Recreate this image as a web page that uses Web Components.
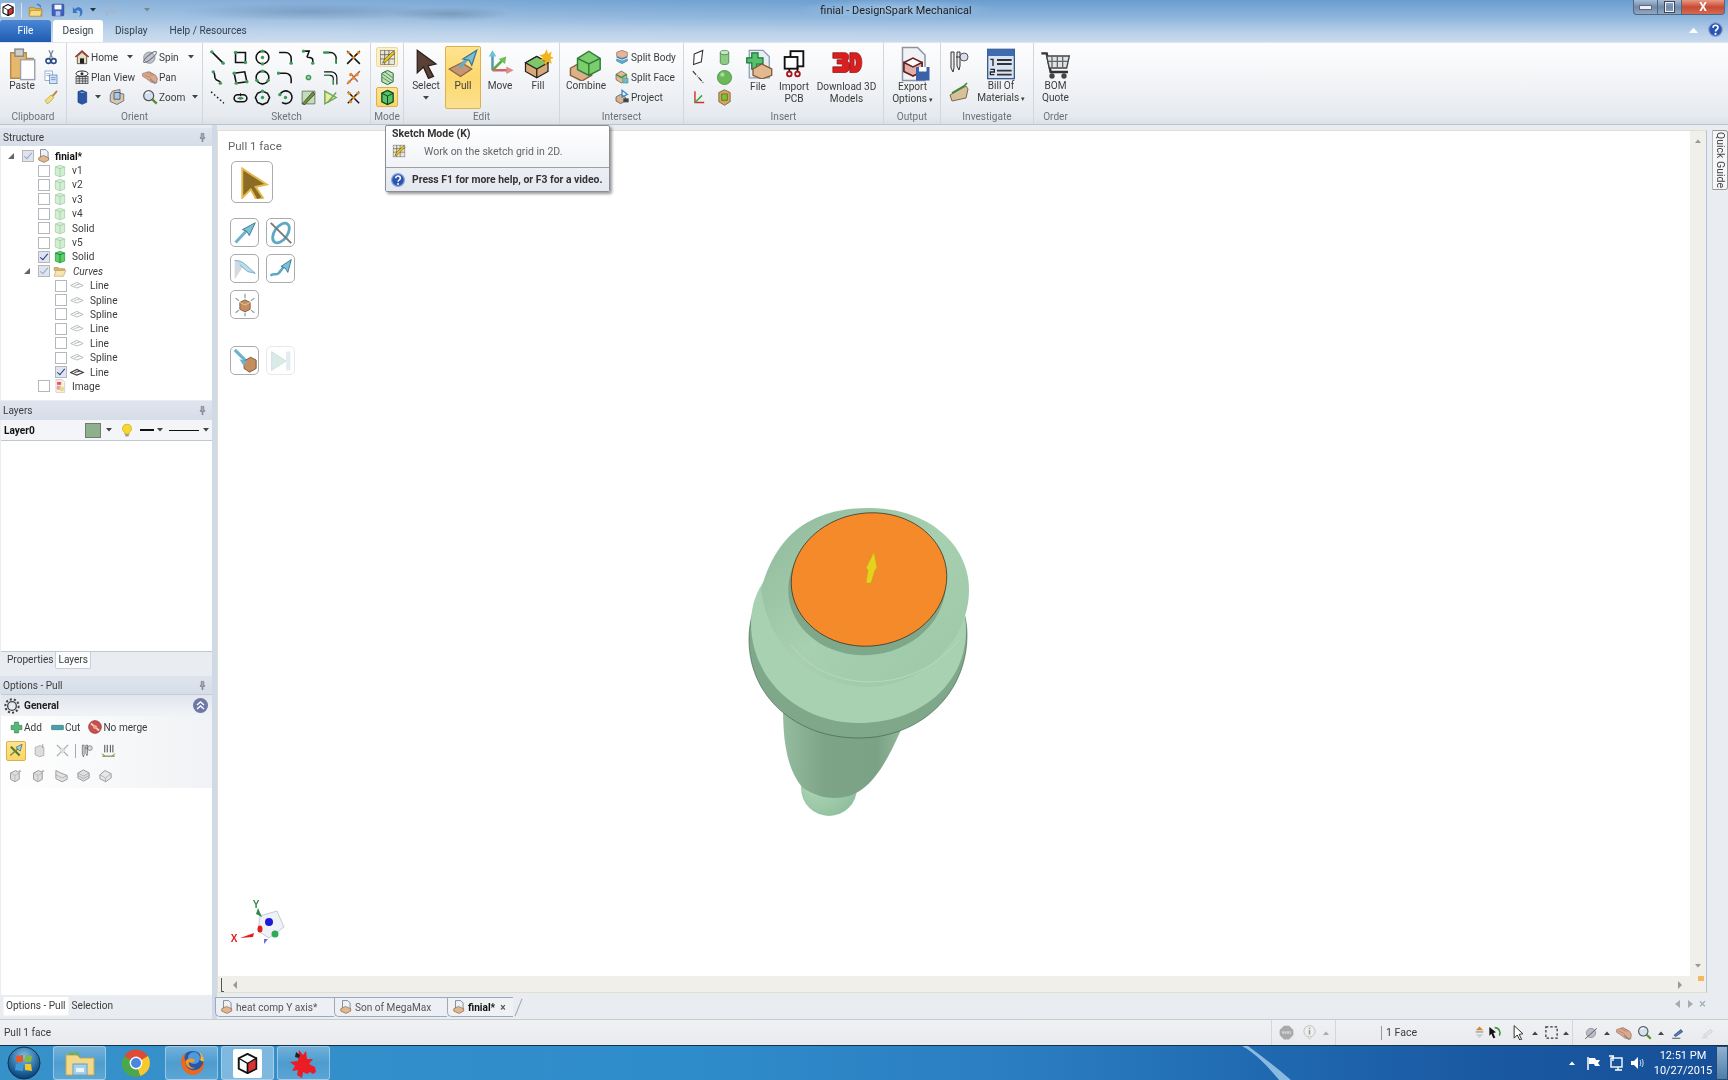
<!DOCTYPE html>
<html><head><meta charset="utf-8"><title>finial - DesignSpark Mechanical</title>
<style>
html,body{margin:0;padding:0;width:1728px;height:1080px;overflow:hidden;background:#e9edf2}
body{font:10.1px Roboto,"Liberation Sans",sans-serif;color:#3c3c3c;display:flex;flex-direction:column;position:relative;filter:blur(.35px)}
</style></head><body>
<ds-titlebar></ds-titlebar>
<ds-ribbon>
 <ds-rgroup label="Clipboard" w="67"><ds-big icon="paste" w="38" ml="3" isize="34">Paste</ds-big><ds-col ml="2"><ds-row icon="cut"></ds-row><ds-row icon="copy"></ds-row><ds-row icon="brush"></ds-row></ds-col></ds-rgroup>
 <ds-rgroup label="Orient" w="136"><ds-col w="68" ml="7"><ds-row icon="home" caret="1" cg="9">Home</ds-row><ds-row icon="plan">Plan View</ds-row><ds-row icon="cube" caret="1" cg="5" cf="1"><ds-icon name="paper" size="18" style="margin-left:6px"></ds-icon></ds-row></ds-col><ds-col w="58"><ds-row icon="spin" caret="1" cg="9">Spin</ds-row><ds-row icon="hand">Pan</ds-row><ds-row icon="zoom" caret="1" cg="7">Zoom</ds-row></ds-col></ds-rgroup>
 <ds-rgroup label="Sketch" w="168"><ds-icongrid ml="3" cols="7" cw="22.7" names="s1 s2 s3 s4 s5 s6 x1 s7 s8 s9 s10 s11 s12 x2 s13 s14 s15 s16 s17 s18 x3"></ds-icongrid></ds-rgroup>
 <ds-rgroup label="Mode" w="33"><ds-icongrid ml="5" cols="1" cw="22" hot="0:soft,2:on" names="sketchmode section solidmode"></ds-icongrid></ds-rgroup>
 <ds-rgroup label="Edit" w="156"><ds-big icon="select" w="40" ml="2" caret="block">Select</ds-big><ds-big icon="pull" w="36" ml="-1" hot="1">Pull</ds-big><ds-big icon="move" w="38">Move</ds-big><ds-big icon="fill" w="38">Fill</ds-big></ds-rgroup>
 <ds-rgroup label="Intersect" w="124"><ds-big icon="combine" w="48" ml="2" isize="34">Combine</ds-big><ds-col ml="4"><ds-row icon="splitb">Split Body</ds-row><ds-row icon="splitf">Split Face</ds-row><ds-row icon="project">Project</ds-row></ds-col></ds-rgroup>
 <ds-rgroup label="Insert" w="200"><ds-icongrid ml="1" cols="2" cw="26" names="plane cyl dline sphere axes mod"></ds-icongrid><ds-big icon="file" w="34" ml="4" isize="30" ih="34">File</ds-big><ds-big icon="pcb" w="38" isize="28" ih="34">Import<br>PCB</ds-big><ds-big icon="d3" w="67" isize="34" ih="34">Download 3D<br>Models</ds-big></ds-rgroup>
 <ds-rgroup label="Output" w="57"><ds-big icon="export" w="53" ml="2" isize="36" ih="34">Export<br>Options<span style="font-size:7px"> ▾</span></ds-big></ds-rgroup>
 <ds-rgroup label="Investigate" w="93"><ds-icongrid ml="4" cols="1" cw="28" rh="30" names="caliper wedge"></ds-icongrid><ds-big icon="bom" w="56" isize="32">Bill Of<br>Materials<span style="font-size:7px"> ▾</span></ds-big></ds-rgroup>
 <ds-rgroup label="Order" w="43" noline="1"><ds-big icon="cart" w="41" ml="1" isize="32">BOM<br>Quote</ds-big></ds-rgroup>
</ds-ribbon>
<ds-main>
 <ds-left slot="left"></ds-left>
 <ds-canvas slot="canvas"></ds-canvas>
 <ds-doctabs slot="tabs"></ds-doctabs>
 <ds-quickguide slot="guide">Quick Guide</ds-quickguide>
</ds-main>
<ds-status></ds-status>
<ds-taskbar></ds-taskbar>
<ds-tooltip></ds-tooltip>
<script>
const K='stroke="#111" fill="none" stroke-width="2.2"';
const G=(x,y,r=2.4)=>`<circle cx="${x}" cy="${y}" r="${r}" fill="#3d9a5a"/>`;
const O=(x,y)=>`<circle cx="${x}" cy="${y}" r="2.2" fill="#e98a1f"/>`;
const ICONS={
home:`<path d="M2 12L12 3l10 9" fill="none" stroke="#a33" stroke-width="2.4"/><path d="M5 11v11h14V11l-7-6z" fill="#e8dcc0" stroke="#222"/><rect x="9" y="14" width="6" height="8" fill="#222"/>`,
plan:`<rect x="3" y="11" width="18" height="11" fill="#ddd" stroke="#333"/><path d="M3 14.5h18M3 18h18M8 11v11M13 11v11M17 11v11" stroke="#333"/><ellipse cx="12" cy="7" rx="9" ry="4" fill="#fff" stroke="#222" stroke-width="1.5"/><circle cx="12" cy="7" r="2.3" fill="#234"/>`,
cube:`<path d="M6 4l6-2 7 3v15l-7 3-6-3z" fill="#2a55a5" stroke="#123a7a"/><path d="M6 4l6 3 7-2" fill="#8fb0e6" stroke="#123a7a"/>`,
paper:`<path d="M6 4l10-2v5l5 1v9l-9 5-9-4V9z" fill="#d9c8a8" stroke="#557"/><path d="M8 6h8v9H8z" fill="#aac6ea" stroke="#345"/>`,
spin:`<circle cx="11" cy="13" r="8.5" fill="#c2c5ce" stroke="#777"/><ellipse cx="12" cy="12" rx="12" ry="3.2" transform="rotate(-40 12 12)" fill="none" stroke="#6b7080" stroke-width="1.6"/>`,
hand:`<path d="M1 7l9-3 10 5 3 5-1 7-8-1-8-6-5-3z" fill="#dda88d" stroke="#8d6a5a"/><path d="M4 9l9 4M7 5l9 5M11 4l7 5" stroke="#a37c68"/><path d="M12 15l8 7" stroke="#888" stroke-width="2"/>`,
zoom:`<circle cx="10" cy="10" r="7.5" fill="#cfe1f2" stroke="#555" stroke-width="1.8"/><path d="M6 7a5 5 0 015-2" stroke="#fff" fill="none" stroke-width="2"/><path d="M15.5 15.5L22 22" stroke="#5e8a2a" stroke-width="3.5"/>`,
cut:`<path d="M9 2l5 11M15 2l-5 11" stroke="#789" stroke-width="2"/><circle cx="8" cy="18" r="3.6" fill="none" stroke="#2d4d85" stroke-width="2.4"/><circle cx="16" cy="18" r="3.6" fill="none" stroke="#2d4d85" stroke-width="2.4"/>`,
copy:`<rect x="3" y="3" width="11" height="14" fill="#fff" stroke="#6a8fc2"/><path d="M5 7h6M5 10h6" stroke="#6a8fc2"/><rect x="10" y="9" width="11" height="13" fill="#d5e5f7" stroke="#4a76b5"/><path d="M12 13h7M12 16h7" stroke="#4a76b5"/>`,
brush:`<path d="M13 10l7-8 2 2-7 8z" fill="#b58a43"/><path d="M3 17c3-1 6-6 9-8l4 4c-2 3-6 8-10 9z" fill="#f1df7f" stroke="#b39a3a"/>`,
paste:`<path d="M4 4h11v4h5v14H4z" fill="#e7b76d" stroke="#b48b4a"/><rect x="7" y="1.5" width="6" height="5" fill="#cfcfcf" stroke="#888"/><rect x="11" y="9" width="10" height="14" fill="#fff" stroke="#9aa3ad"/>`,
select:`<path d="M5 1l15 11-6.5 1.5L18 22l-4 1.5-4-9L5 19z" fill="#5b4038" stroke="#2a1f1b"/>`,
pull:`<path d="M1 16l10-5 8 5-9 6z" fill="#c69572" stroke="#8b6546"/><path d="M9 15L17 6" stroke="#6fa9bf" stroke-width="2.8"/><path d="M23 1l-4 12-2-4-5-1z" fill="#7dbcd2" stroke="#3b7990"/>`,
move:`<path d="M6 3v14" stroke="#4e9bb1" stroke-width="2"/><path d="M6 1l3 5H3z" fill="#6cc0d8"/><path d="M6 17l8-8" stroke="#62a84b" stroke-width="2"/><path d="M17 6l-1 6-5-4z" fill="#6fbe55"/><path d="M6 17h14" stroke="#c76a6a" stroke-width="2"/><path d="M23 17l-6 3v-6z" fill="#e08a8a"/>`,
fill:`<path d="M2 11l9-5 9 5v7l-9 5-9-5z" fill="#d8a977" stroke="#222"/><path d="M2 11l9-5 9 5-9 5z" fill="#7ec66a" stroke="#222"/><path d="M11 16v7" stroke="#222"/><path d="M19 0l1 4 3-2-1 4 3 1-3 1 1 4-3-2-2 3-1-4-4 1 3-3-3-2 4-1z" fill="#f2b31e"/>`,
combine:`<path d="M1 15l7-4 8 4v5l-7 4-8-4z" fill="#dcb088" stroke="#88603d"/><path d="M6 8l8-5 8 5v8l-8 4-8-4z" fill="#7ccd6e" stroke="#2e7a36"/><path d="M6 8l8 4 8-4M14 12v8" stroke="#2e7a36" fill="none"/>`,
splitb:`<path d="M4 5l8-3 8 3v6l-8 3-8-3z" fill="#e3b59a" stroke="#8b6a55"/><path d="M4 12l8 3 8-3" stroke="#3a78c2" fill="none" stroke-width="2"/><path d="M4 15l8 3 8-3v3l-8 4-8-4z" fill="#5cb0c2" stroke="#48a"/>`,
splitf:`<path d="M3 8l8-5 8 5v8l-8 5-8-5z" fill="#e3b59a" stroke="#6a5040"/><path d="M3 8l8 5 8-5" stroke="#2a9a46" stroke-width="2" fill="none"/><path d="M13 14l8 0v7h-8z" fill="#7ab2dd" stroke="#3a6"/>`,
project:`<path d="M3 12l7-4 7 4v6l-7 4-7-4z" fill="#d8b38e" stroke="#444"/><path d="M12 2l8 6-8 4z" fill="none" stroke="#3a8acb" stroke-width="2"/><path d="M14 14h8v6h-8z" fill="#444"/>`,
plane:`<path d="M6 7l12-5-2 16-11 4z" fill="#fff" stroke="#333" stroke-width="1.5"/>`,
cyl:`<path d="M6 5v14c0 4 12 4 12 0V5z" fill="#8fca86" stroke="#2d7a3e"/><ellipse cx="12" cy="5" rx="6" ry="3" fill="#c8e7c0" stroke="#2d7a3e"/>`,
dline:`<path d="M4 3l16 18" stroke="#333" stroke-width="1.6" stroke-dasharray="7 2 1 2"/>`,
sphere:`<circle cx="12" cy="12" r="10" fill="#69b959" stroke="#3f7f3c"/><circle cx="9" cy="8" r="3" fill="#a9dc9a"/>`,
axes:`<path d="M7 3v16h13" fill="none" stroke="#c33" stroke-width="2"/><path d="M7 19L17 9" stroke="#3a3" stroke-width="2"/>`,
mod:`<path d="M12 1l8 4v13l-8 5-8-5V5z" fill="#d4a560" stroke="#6a4a20"/><path d="M8 7h8v9H8z" fill="#7fbf3a" stroke="#3b6a1a"/>`,
file:`<path d="M5 1h11l5 5v17H5z" fill="#e9eef5" stroke="#8a9bb0"/><path d="M7 3h5v4h4v5h-5v4H7V11H3V7h4z" fill="#58bf6b" stroke="#1a7a3a"/><path d="M8 16l7-4 8 4v5l-8 3-7-3z" fill="#e2b98f" stroke="#7a5535"/>`,
pcb:`<rect x="9" y="1" width="11" height="13" fill="#fff" stroke="#111" stroke-width="1.6"/><rect x="4" y="6" width="11" height="10" fill="#fff" stroke="#111" stroke-width="1.6"/><path d="M8 16v3M15 14v5" stroke="#111" stroke-width="1.5"/><circle cx="8" cy="20.5" r="2" fill="none" stroke="#a11" stroke-width="1.5"/><circle cx="15" cy="20.5" r="2" fill="none" stroke="#a11" stroke-width="1.5"/>`,
d3:`<path d="M2 4h8c4 0 4 4 2 6 3 1 3 7-1 8H2v-4h6c1 0 1-2 0-2H5V9h3c1 0 1-1 0-1H2z" fill="#d91f1f" stroke="#8d1010" stroke-width=".5"/><path d="M14 4h4c6 0 6 14 0 14h-4zM17 8v6c2 0 2-6 0-6z" fill="#d91f1f" stroke="#8d1010" stroke-width=".5"/>`,
export:`<path d="M5 1h10l5 5v17H5z" fill="#f1f2f5" stroke="#8a94a5"/><path d="M6 11l6-3 6 3v6l-6 3-6-3z" fill="#fff" stroke="#622"/><path d="M6 11l6 3 6-3v6l-6 3-6-3z" fill="#e0b0a8" stroke="#622"/><rect x="14" y="14" width="9" height="9" fill="#3b62a8"/><rect x="16" y="14" width="5" height="3" fill="#fff"/>`,
caliper:`<path d="M4 2v16l2 4 1-4V2zM10 2v14l2 4 1-4V2z" fill="#eee" stroke="#333"/><circle cx="17" cy="7" r="4" fill="#dde" stroke="#555"/><path d="M13 7H9" stroke="#333"/>`,
wedge:`<path d="M3 15l16-9 2 3-2 9-14 3z" fill="#d6c19a" stroke="#7a6a4a"/><path d="M5 13L17 6l3-3" stroke="#3a8a3a" fill="none" stroke-width="1.6"/>`,
bom:`<rect x="2" y="1" width="20" height="22" fill="#d8e4f4" stroke="#395a8c"/><rect x="2" y="1" width="20" height="5" fill="#3f6cb0"/><path d="M9 9h11M9 12h11M9 17h11M9 20h11" stroke="#333" stroke-width="1.4"/><path d="M4 8.5h2v5M4 16h3v2H4v2h3" stroke="#222" fill="none"/>`,
cart:`<path d="M1 4h4l3 14h13" fill="none" stroke="#333" stroke-width="1.8"/><path d="M5 6h17l-2 9H7z" fill="#dfe4ea" stroke="#444"/><path d="M9 6v9M13 6v9M17 6v9M6 10h15" stroke="#666"/><circle cx="9" cy="21" r="2" fill="#444"/><circle cx="18" cy="21" r="2" fill="#444"/>`,
sketchmode:`<rect x="2" y="2" width="20" height="20" fill="#e9e6d6" stroke="#777"/><path d="M2 8h20M2 14h20M8 2v20M14 2v20" stroke="#3a3a3a" stroke-width=".9"/><path d="M5 20l3-6L20 3l2 3L10 18z" fill="#e6c11f" stroke="#6b5a10"/>`,
section:`<path d="M12 2l8 4v12l-8 4-8-4V6z" fill="#bfe2b5" stroke="#2a6a3a" stroke-width="1.4"/><path d="M5 7l14 10M5 12l12 8M8 4l11 8" stroke="#2a6a3a"/>`,
solidmode:`<path d="M12 2l8 4v12l-8 4-8-4V6z" fill="#59c06b" stroke="#0a4a20" stroke-width="1.8"/><path d="M4 6l8 4 8-4M12 10v12" fill="none" stroke="#0a4a20" stroke-width="1.4"/>`,
s1:`<path d="M4 4l16 16" ${K}/>${G(4,4)}${G(20,20)}`,
s2:`<path d="M5 5h14v14H5z" ${K}/>${G(5,5)}${G(19,19)}`,
s3:`<circle cx="12" cy="12" r="9" ${K}/>${G(12,12)}${G(12,3)}${G(12,21)}`,
s4:`<path d="M3 5h9a8 8 0 018 8v7" ${K}/>${G(20,20)}`,
s5:`<path d="M5 3h8l-3 8c0 2 8 0 8 4v5" ${K}/>${G(5,3)}${G(18,20)}`,
s6:`<path d="M2 5h10a8 8 0 018 8v7" fill="none" stroke="#111" stroke-width="2"/><path d="M2 5h8" stroke="#2d9a4a" stroke-width="3"/><path d="M20 14v7" stroke="#2d9a4a" stroke-width="2"/>`,
x1:`<path d="M3 3l18 18M21 3L3 21" stroke="#111" stroke-width="2"/>${O(12,12)}${O(5,5)}${O(19,5)}`,
s7:`<path d="M6 4c4 2 0 8 4 11s6 1 6 5" ${K}/>${G(6,4)}${G(16,20)}`,
s8:`<path d="M3 6l15-2 3 14-15 2z" ${K}/>${G(3,6)}${G(21,18)}${G(6,20)}`,
s9:`<circle cx="12" cy="12" r="9" ${K}/>${G(12,3)}${G(4,16)}${G(20,16)}`,
s10:`<path d="M2 6h10a8 8 0 018 8v6" ${K}/>${G(2,6)}`,
s11:`<circle cx="12" cy="12" r="4" fill="#3d9a5a"/><circle cx="12" cy="12" r="2" fill="#9fd4a9"/>`,
s12:`<path d="M3 9h8a5 5 0 015 5v8M3 4h10a8 8 0 018 8v10" fill="none" stroke="#111" stroke-width="1.6"/><path d="M3 9h8M16 15v7" stroke="#2d9a4a" stroke-width="2"/>`,
x2:`<path d="M3 21L21 3" stroke="#a66" stroke-width="2"/><path d="M8 6l10 12" stroke="#a66" stroke-width="2"/>${O(8,8)}${O(17,8)}${O(12,13)}${O(6,18)}`,
s13:`<path d="M3 4l18 16" stroke="#111" stroke-width="2" stroke-dasharray="2.2 3.4"/>`,
s14:`<rect x="3" y="8" width="18" height="10" rx="5" ${K}/><path d="M8 13h8M12 6v4" stroke="#111" stroke-width="1.5"/>${G(12,13)}`,
s15:`<path d="M12 3l7 3 3 6-3 7-7 3-7-3-3-7 3-6z" ${K}/>${G(12,12)}${G(12,3)}`,
s16:`<path d="M4 8a9 9 0 1 1 3 11" ${K}/>${G(12,12)}${G(4,8)}`,
s17:`<path d="M3 3h18v18H3z" fill="#bde0b8" stroke="#555"/><path d="M3 21L18 4l3 3L7 22z" fill="#7d8a3a" stroke="#333"/>`,
s18:`<path d="M4 3l16 9-16 9z" fill="#f0e8a0" stroke="#6aa85a" stroke-width="2"/><path d="M8 19L20 5" stroke="#6aa85a" stroke-width="2"/>`,
x3:`<path d="M4 4l16 16M20 4L4 20" stroke="#111" stroke-width="2"/>${O(12,12)}${O(6,6)}${O(18,6)}${O(8,18)}`,
cubeL:`<path d="M4 5l8-3 8 3v14l-8 3-8-3z" fill="#d4eed4" stroke="#8fc294"/><path d="M4 5l8 3 8-3M12 8v14" fill="none" stroke="#8fc294"/>`,
cubeA:`<path d="M4 5l8-3 8 3v14l-8 3-8-3z" fill="#62cd66" stroke="#083"/><path d="M4 5l8 3 8-3M12 8v14" fill="none" stroke="#073" stroke-width="1.3"/>`,
doc:`<path d="M6 1h9l4 4v12H6z" fill="#eef1f5" stroke="#6b7a90" stroke-width="1.4"/><path d="M3 15l8-4 9 4v4l-8 4-9-4z" fill="#e3b68d" stroke="#7a5535"/>`,
folder:`<path d="M2 6h7l2 2h9v3H2z" fill="#d9b66b" stroke="#a98a4a"/><path d="M2 21l3-10h17l-4 10z" fill="#f6e4b2" stroke="#b39a55"/>`,
eyeL:`<path d="M1 12l10-5 10 5-10 4zM7 12l8-2" fill="none" stroke="#b6c0bb" stroke-width="1.6"/>`,
eyeA:`<path d="M1 12l10-5 10 5-10 4zM7 12l8-2" fill="none" stroke="#444" stroke-width="2"/>`,
image:`<path d="M5 1h11l4 4v18H5z" fill="#f4f2ef" stroke="#bbb"/><circle cx="10" cy="15" r="4" fill="#e9a0a0"/><circle cx="15" cy="17" r="4" fill="#f1d67a"/><path d="M7 5h7v5H7z" fill="#e55"/>`,
pin:`<path d="M9 3h6v9h2v2h-4v7h-2v-7H7v-2h2z" fill="#aab" stroke="#556"/>`,
add:`<path d="M8 2h8v6h6v8h-6v6H8v-6H2V8h6z" fill="#5bb577" stroke="#2a7a4a"/>`,
cutm:`<rect x="1" y="8" width="22" height="8" rx="1" fill="#4aa0a8" stroke="#2a6a7a"/>`,
nomerge:`<circle cx="12" cy="12" r="11" fill="#c8504a" stroke="#8a2a2a"/><path d="M5 6l14 12" stroke="#f2d4d0" stroke-width="3"/><circle cx="12" cy="12" r="3.5" fill="#e9a7a0"/>`,
o1:`<path d="M3 6l14 14" stroke="#4a7a2a" stroke-width="3"/><path d="M2 20L20 4" stroke="#6a8a3a" stroke-width="2"/><path d="M21 2l-3 11-7-6z" fill="#9fd0dc" stroke="#357"/>`,
o2:`<path d="M5 7l8-3 6 3v13l-7 2-7-3z" fill="#ddd" stroke="#999"/><path d="M17 2v6" stroke="#aaa" stroke-width="2"/>`,
o3:`<path d="M3 21L21 3M3 3l18 18" stroke="#aaa" stroke-width="2"/><path d="M12 7l5 5-5 5-5-5z" fill="#ddd"/>`,
o5:`<path d="M2 21h20M2 17l4 4M22 17l-4 4" stroke="#6a7a1a" stroke-width="1.6" fill="none"/><path d="M6 3v12M10 3v12M15 3v12M19 3v12" stroke="#333" stroke-width="1.4"/>`,
og1:`<path d="M4 8l8-4 6 3v11l-7 4-7-4z" fill="#ddd" stroke="#999" stroke-width="1.5"/><path d="M4 8l7 4 7-4M11 12v10" fill="none" stroke="#aaa"/><path d="M19 3v4M17 5h4" stroke="#aaa" stroke-width="1.5"/>`,
og3:`<path d="M3 4l8 4 10 4v6l-8 4-10-5z" fill="#e3e3e3" stroke="#999" stroke-width="1.5"/><path d="M3 11l10 5 8-4" fill="none" stroke="#999"/>`,
og4:`<path d="M3 8l9-5 9 5v8l-9 5-9-5z" fill="#e0e0e0" stroke="#999" stroke-width="1.5"/><path d="M3 8l9 5 9-5M3 12l9 5 9-5" fill="none" stroke="#999"/>`,
og5:`<path d="M3 11l8-7 10 5v7l-9 6-9-5z" fill="#e7e7e7" stroke="#999" stroke-width="1.5"/><path d="M3 11l9 5 9-7M12 16v6" fill="none" stroke="#999"/>`,
gear:`<circle cx="12" cy="12" r="6.5" fill="none" stroke="#444" stroke-width="2"/><circle cx="12" cy="12" r="10" fill="none" stroke="#444" stroke-width="3" stroke-dasharray="3.2 3"/>`,
bulb:`<path d="M12 2a7.5 7.5 0 00-4 14v3h8v-3a7.5 7.5 0 00-4-14z" fill="#f8d82a" stroke="#c09a10"/><rect x="9" y="19" width="6" height="4" fill="#999"/>`,
help:`<circle cx="12" cy="12" r="11" fill="#2b55b3" stroke="#8ba4d6" stroke-width="2"/><path d="M8 9c0-5 8-5 8 0 0 3-4 3-4 6" fill="none" stroke="#fff" stroke-width="2.6"/><circle cx="12" cy="19" r="1.7" fill="#fff"/>`,
stop:`<path d="M8 1h8l7 7v8l-7 7H8l-7-7V8z" fill="#a9a9a9"/><path d="M5 12h14" stroke="#d6d6d6" stroke-width="4" stroke-dasharray="3 1"/>`,
info:`<circle cx="12" cy="10" r="9" fill="#eee" stroke="#bbb" stroke-width="1.4"/><path d="M12 8v7M12 4.5v1.7" stroke="#999" stroke-width="2.4"/><path d="M9 19l3 4 3-4" fill="#eee" stroke="#bbb"/>`,
sortud:`<path d="M12 1l7 7H5z" fill="#d18a2b"/><path d="M5 11h14" stroke="#888" stroke-width="2"/><path d="M5 15h14l-7 7z" fill="#ccc"/>`,
curs:`<path d="M5 3l10 8-4 1 3 7-3 1-3-7-3 3z" fill="#111"/><path d="M13 4a8 8 0 017 12" stroke="#3a9a3a" stroke-width="2.4" fill="none"/>`,
arrowO:`<path d="M5 1l14 13-6 1 4 8-3 1-4-8-5 5z" fill="#fff" stroke="#333" stroke-width="1.6"/>`,
dashrect:`<rect x="3" y="3" width="18" height="18" fill="none" stroke="#333" stroke-width="2" stroke-dasharray="4 3"/>`,
spinS:`<circle cx="12" cy="12" r="8" fill="#b9bcc6" stroke="#777"/><path d="M2 22L22 4" stroke="#556" stroke-width="1.6"/>`,
penS:`<path d="M2 21h14" stroke="#345" stroke-width="1.5"/><path d="M5 16l12-10 3 4-12 8z" fill="#5476c6" stroke="#234"/>`,
penG:`<path d="M3 20h10" stroke="#bbb"/><path d="M6 16l12-10 3 4-12 8z" fill="#e8e8e8" stroke="#bbb"/>`,
appcube:`<path d="M12 1l10 5v12l-10 5L2 18V6z" fill="#fff" stroke="#111" stroke-width="2.2"/><path d="M12 12l10-6v12l-10 5z" fill="#d83232" stroke="#111" stroke-width="1.5"/><path d="M2 6l10 6v11M12 12" fill="none" stroke="#111" stroke-width="1.6"/>`,
open:`<path d="M2 7h8l2 2h10v12H2z" fill="#e8b93d" stroke="#a07a20"/><path d="M4 12h18l-2 9H2z" fill="#f7dc88" stroke="#b08a2d"/><path d="M14 2c4 0 6 2 6 5" stroke="#3a78c2" fill="none" stroke-width="2"/>`,
save:`<rect x="2" y="2" width="20" height="20" rx="1.5" fill="#3f5fbf" stroke="#223a88"/><rect x="6" y="3" width="12" height="8" fill="#f5f5f5"/><rect x="8" y="14" width="8" height="8" fill="#a9c0f0"/>`,
undo:`<path d="M7 9c6-5 13 0 11 8-1 2-2 4-5 5 3-5 2-9-1-10-2-1-3 0-4 1l3 3H3V6l2 3z" fill="#3d74c2"/>`,
redo:`<path d="M17 9c-6-5-13 0-11 8 1 2 2 4 5 5-3-5-2-9 1-10 2-1 3 0 4 1l-3 3h8V6l-2 3z" fill="#9fb7d0"/>`,
};
const ico=(n,s=16,st='')=>`<svg width="${s}" height="${s}" viewBox="0 0 24 24" style="display:block;flex:none;${st}" aria-hidden="true">${ICONS[n]||''}</svg>`;
const FONT='font:10.1px Roboto,"Liberation Sans",sans-serif;color:#3c3c3c;';
const caret=(c='#444',st='')=>`<svg width="6" height="4" viewBox="0 0 6 4" style="display:block;flex:none;${st}"><path d="M0 0h6L3 3.5z" fill="${c}"/></svg>`;
const upc=(c='#555',st='')=>`<svg width="6" height="4" viewBox="0 0 6 4" style="display:block;flex:none;${st}"><path d="M0 4h6L3 .5z" fill="${c}"/></svg>`;
function def(name,render){customElements.define(name,class extends HTMLElement{constructor(){super();this.attachShadow({mode:'open'})}connectedCallback(){this.shadowRoot.innerHTML=render(this)}})}
const a=(e,n,d='')=>e.getAttribute(n)??d;

def('ds-icon',e=>`<style>:host{display:block;flex:none}</style>${ico(a(e,'name'),+a(e,'size',16))}`);

def('ds-titlebar',()=>`<style>
:host{display:block;height:42px;flex:none;position:relative;${FONT}
background:radial-gradient(ellipse 130px 9px at 310px 12px,rgba(70,100,140,.3),transparent),radial-gradient(ellipse 60px 7px at 450px 14px,rgba(60,90,110,.3),transparent),radial-gradient(ellipse 100px 10px at 896px 9px,rgba(190,215,240,.55),transparent),linear-gradient(90deg,rgba(210,225,240,.35),rgba(210,225,240,.1) 35%,transparent 55%),linear-gradient(#6a9dd0,#8eb5dc 42%,#b9d0e9 78%,#c8daee)}
.top{display:flex;height:20px;align-items:center}
.q{display:flex;align-items:center;width:166px;padding-left:1px;box-sizing:border-box}
.title{width:300px;margin-left:580px;text-align:center;font-size:10.9px;color:#1e1e1e;white-space:nowrap}
.ctl{margin-left:auto;display:flex;align-items:flex-start;align-self:flex-start;margin-right:3px}
.b{height:15px;display:flex;align-items:center;justify-content:center;box-sizing:border-box;border:1px solid #51677f;border-top:0;background:linear-gradient(#a8bed6,#6f89a8 50%,#92a9c4)}
.b.c{background:linear-gradient(#e89a84,#c74a34 50%,#d66a52);width:43px;border-radius:0 0 4px 0;color:#fff;font-weight:700;font-size:12px}
.tabs{display:flex;height:22px;align-items:flex-end}
.file{width:51px;height:22px;background:linear-gradient(#4b87d4,#1e5cb3);color:#fff;border-radius:3px 3px 0 0;text-align:center;line-height:22px}
.t{height:22px;line-height:22px;color:#33414f}
.des{width:50px;margin-left:2px;background:linear-gradient(#fff,#fcfdfe);text-align:center;border-radius:3px 3px 0 0}
.end{margin-left:auto;display:flex;align-items:center;gap:10px;padding:0 5px 5px 0}
</style>
<div class="top"><div class="q"><span style="background:#fff;padding:1px;border-radius:2px;margin-right:6px">${ico('appcube',12)}</span><span style="width:1px;height:15px;background:#d6e2f0;margin-right:6px"></span>${ico('open',15)}<span style="width:8px"></span>${ico('save',14)}<span style="width:6px"></span>${ico('undo',15)}${caret('#234','margin:0 6px 0 4px')}${ico('redo',15)}<span style="width:27px"></span>${caret('#788','')}</div>
<div class="title">finial - DesignSpark Mechanical</div>
<div class="ctl"><div class="b" style="width:25px;border-radius:0 0 0 4px"><span style="display:block;width:11px;height:3px;background:#eef;border:1px solid #667"></span></div><div class="b" style="width:24px;border-left:0"><span style="display:block;width:7px;height:8px;border:1px solid #eef;outline:1px solid #445"></span></div><div class="b c" style="border-left:0"><span>X</span></div></div></div>
<div class="tabs"><div class="file">File</div><div class="t des">Design</div><div class="t" style="margin-left:12px">Display</div><div class="t" style="margin-left:22px">Help / Resources</div>
<div class="end">${upc('#fff','width:9px;height:6px;outline:0')}${ico('help',15)}</div></div>`);

def('ds-ribbon',()=>`<style>:host{display:flex;height:83px;flex:none;background:linear-gradient(#fdfdfe,#f7f8fa 30%,#e6eaef 90%,#dde1e6);border-bottom:1px solid #bcc4cd;box-sizing:border-box;border-top:1px solid #dfe6ee}</style><slot></slot>`);

def('ds-rgroup',e=>`<style>:host{display:flex;flex-direction:column;flex:none;box-sizing:border-box;width:${a(e,'w')}px;height:81px;${a(e,'noline')?'':'border-right:1px solid #d2d7dd;'}${FONT}}
.c{flex:none;height:67px;display:flex;padding-top:4px;box-sizing:border-box}
.l{text-align:center;color:#6c7279;line-height:14px;height:14px;white-space:nowrap}</style><div class="c"><slot></slot></div><div class="l">${a(e,'label')}</div>`);

def('ds-big',e=>{const s=+a(e,'isize',30),h=a(e,'hot');return `<style>:host{display:block;flex:none;width:${a(e,'w')}px;margin-left:${a(e,'ml',0)}px;height:63px;margin-top:-1px;box-sizing:border-box;text-align:center;line-height:12px;border-radius:2px;white-space:nowrap;${h?'background:linear-gradient(#fee390,#fcd86d 50%,#fbe08f);border:1px solid #dcb04b;':'border:1px solid transparent;'}}
.i{height:${a(e,'ih',33)}px;display:flex;align-items:center;justify-content:center;overflow:visible}</style><div class="i">${ico(a(e,'icon'),s)}</div><slot></slot>${a(e,'caret')?caret('#444','margin:4px auto 0'):''}`});

def('ds-col',e=>`<style>:host{display:flex;flex-direction:column;flex:none;margin-left:${a(e,'ml',0)}px;${a(e,'w')?`width:${a(e,'w')}px;`:''}}</style><slot></slot>`);

def('ds-row',e=>{const c=a(e,'caret')?caret('#444',`margin-left:${a(e,'cg',6)}px`):'';const cf=a(e,'cf');return `<style>:host{display:flex;align-items:center;height:20px;white-space:nowrap}span{margin-left:1px}</style>${ico(a(e,'icon'),16)}${cf?c:''}<span><slot></slot></span>${cf?'':c}`});

def('ds-icongrid',e=>{const h={};a(e,'hot').split(',').forEach(x=>{const[i,v]=x.split(':');if(v)h[i]=v});const rh=+a(e,'rh',20);
return `<style>:host{display:grid;flex:none;align-content:start;margin-left:${a(e,'ml',0)}px;grid-template-columns:repeat(${a(e,'cols')},${a(e,'cw')}px);grid-auto-rows:${rh}px}
div{display:flex;align-items:center;justify-content:center;box-sizing:border-box;border:1px solid transparent;border-radius:2px}.soft{background:#fdf0c4;border-color:#e9d9a2}.on{background:linear-gradient(#fee390,#fbd569);border-color:#dcb04b}</style>`+a(e,'names').split(' ').map((n,i)=>`<div class="${h[i]||''}">${ico(n,rh>20?24:17)}</div>`).join('')});

def('ds-main',()=>`<style>:host{flex:1;min-height:0;display:grid;grid-template-columns:212px 1fr 21px;grid-template-rows:1fr 26px;background:#e9edf2}
.l{grid-row:1/3;display:flex;border-right:5px solid #cfd9e8;width:217px;box-sizing:border-box}
.l ::slotted(*){flex:1}
.c{grid-column:2;grid-row:1;padding:5px 0 0 0;margin-left:5px;min-height:0;display:flex}
.g{grid-column:3;grid-row:1;padding-top:5px}.t{grid-column:2;grid-row:2;margin-left:3px}</style>
<div class="l"><slot name="left"></slot></div><div class="c"><slot name="canvas"></slot></div><div class="g"><slot name="guide"></slot></div><div class="t"><slot name="tabs"></slot></div>`);

const tree=[[0,'doc','finial*',1,'b'],[1,'cubeL','v1'],[1,'cubeL','v2'],[1,'cubeL','v3'],[1,'cubeL','v4'],[1,'cubeL','Solid'],[1,'cubeL','v5'],[1,'cubeA','Solid',2],[1,'folder','Curves',1,'i'],[2,'eyeL','Line'],[2,'eyeL','Spline'],[2,'eyeL','Spline'],[2,'eyeL','Line'],[2,'eyeL','Line'],[2,'eyeL','Spline'],[2,'eyeA','Line',2],[1,'image','Image']];
def('ds-tree',()=>`<style>:host{display:block;${FONT}padding-top:3px;box-sizing:border-box}
.r{display:flex;align-items:center;height:14.4px;white-space:nowrap}
.cb{width:10px;height:10px;border:1px solid #b4b8bd;background:#fff;flex:none;position:relative;box-sizing:content-box}
.cb.m{background:#dfe4ee}.cb.m::after,.cb.k::after{content:"";position:absolute;left:3px;top:0;width:3px;height:7px;border:solid #98a4c4;border-width:0 1.5px 1.5px 0;transform:rotate(40deg)}
.cb.k{background:#dfe4ee}.cb.k::after{border-color:#233a8c}
.ex{width:0;height:0;border:solid transparent;border-width:0 0 6px 6px;border-bottom-color:#666;flex:none}
</style>`+tree.map(([l,i,t,c,s])=>{const cx=[21,37,54][l];const hasEx=(l==0||t=='Curves');const tm=l==2?5:(l==0?4:(t=='Curves'?6:5));return `<div class="r"><span style="width:${hasEx?cx-14:cx}px;flex:none"></span>${hasEx?'<span class="ex" style="margin-right:8px"></span>':''}<span class="cb ${c==1?'m':c==2?'k':''}"></span>${ico(i,l==2?15:14,`margin-left:3px`)}<span style="margin-left:${tm}px;${s=='b'?'font-weight:700;color:#111;':''}${s=='i'?'font-style:italic;':''}">${t}</span></div>`}).join(''));

def('ds-phead',e=>`<style>:host{display:flex;align-items:center;justify-content:space-between;height:${a(e,'h',18)}px;padding:0 3px;background:linear-gradient(#dfe5ee,#d5dde8);flex:none;${FONT}}</style><span><slot></slot></span>${ico('pin',11,'margin-right:1px')}`);

def('ds-left',()=>`<style>:host{display:flex;flex-direction:column;background:#e9edf2;${FONT}}
.w{background:#fff;margin:0 0 0 1px}
.lr{display:flex;align-items:center;height:21px;background:#f3f5f8;border-bottom:1px solid #c4c8ce;padding-left:3px;box-sizing:border-box;color:#111}
.tabs{display:flex;height:17px;align-items:stretch}
.tb{padding:0 2px;line-height:16px}
.sel{background:#fbfcfd;border:1px solid #ccd;border-top:0;border-radius:0 0 2px 2px}
.gen{display:flex;align-items:center;height:21px;background:linear-gradient(#e1e6ee,#f1f3f6);padding:0 3px;font-weight:700;color:#222}
.opt{height:72px;background:linear-gradient(90deg,#fff,#f0f2f5);padding-left:5px}
.ro{display:flex;align-items:center;height:24px}
.ro span{margin-left:1px}
</style>
<div style="height:3px"></div>
<ds-phead>Structure</ds-phead>
<ds-tree class="w" style="height:254px;flex:none"></ds-tree>
<div style="height:1px"></div>
<ds-phead h="19">Layers</ds-phead>
<div class="w lr"><b style="width:81px;flex:none">Layer0</b><span style="width:14px;height:13px;background:#8fb08d;border:1px solid #777;flex:none"></span>${caret('#444','margin-left:5px')}${ico('bulb',14,'margin-left:8px')}<span style="width:14px;height:2.5px;background:#111;margin-left:6px;flex:none"></span>${caret('#444','margin-left:3px')}<span style="width:30px;height:1px;background:#111;margin-left:6px;flex:none"></span>${caret('#444','margin-left:4px')}</div>
<div class="w" style="height:210px;border-bottom:1px solid #c4c8ce"></div>
<div class="tabs" style="margin:0 0 0 5px"><div class="tb" style="padding:0 2px">Properties</div><div class="tb sel">Layers</div></div>
<div style="height:7px"></div>
<ds-phead h="18">Options - Pull</ds-phead>
<div class="w" style="flex:1;border-top:1px solid #c8ccd2;margin-bottom:0">
<div class="gen">${ico('gear',16)}<span style="margin-left:4px">General</span><span style="margin-left:auto;width:15px;height:15px;border-radius:50%;background:#6d78a6;display:flex;align-items:center;justify-content:center;margin-right:1px"><svg width="9" height="9" viewBox="0 0 9 9" aria-hidden="true"><path d="M1 4l3.5-3L8 4M1 8l3.5-3L8 8" fill="none" stroke="#fff" stroke-width="1.4"/></svg></span></div>
<div class="opt"><div class="ro" style="padding-left:4px;height:22px">${ico('add',13)}<span>Add</span>${ico('cutm',13,'margin-left:9px')}<span>Cut</span>${ico('nomerge',14,'margin-left:8px')}<span>No merge</span></div>
<div class="ro" style="height:25px"><span style="display:flex;align-items:center;justify-content:center;width:20px;height:20px;margin:0;background:linear-gradient(#fee390,#fbd569);border:1px solid #dcb04b;border-radius:2px;box-sizing:border-box">${ico('o1',15)}</span>${ico('o2',15,'margin-left:6px')}${ico('o3',15,'margin-left:8px')}<span style="width:1px;height:14px;background:#aaa;margin-left:5px"></span>${ico('caliper',14,'margin-left:4px')}${ico('o5',15,'margin-left:7px')}</div>
<div class="ro" style="padding-left:2px">${ico('og1',15)}${ico('og1',15,'margin-left:8px')}${ico('og3',15,'margin-left:8px')}${ico('og4',15,'margin-left:7px')}${ico('og5',15,'margin-left:7px')}</div></div>
</div>
<div class="tabs" style="height:22px;align-items:flex-start;padding:2px 0 0 3px"><div class="tb sel" style="height:18px;line-height:18px;border-color:#f4f5f7;background:#fff;padding:0 2px">Options - Pull</div><div class="tb" style="line-height:18px;padding-left:3px">Selection</div></div>`);

def('ds-tool',e=>{const s=+a(e,'s',29);return `<style>:host{display:flex;align-items:center;justify-content:center;width:${s}px;height:${s}px;flex:none;box-sizing:border-box;border:1px solid ${a(e,'off')?'#e6e8ea':'#ababab'};border-radius:5px;background:#fff}</style><slot></slot>`});

const TI=(s,b)=>`<svg width="${s}" height="${s}" viewBox="0 0 28 28" style="display:block">${b}</svg>`;
def('ds-canvas',()=>`<style>:host{flex:1;display:grid;grid-template-columns:1fr 16px;grid-template-rows:1fr 16px;height:863px;box-sizing:border-box;border:1px solid #e2dfca;border-right:1px solid #b7c4dc;background:#fff;${FONT}}
.v{position:relative;padding:8px 0 0 10px;min-height:0}
.tx{font-size:11.5px;color:#666;line-height:14px}
.tg{display:grid;grid-template-columns:29px 29px;gap:7px;margin-left:2px}
.sb{background:#f0efe9;display:flex;flex-direction:column;justify-content:space-between;align-items:center;padding:8px 0}
.sh{background:#f0efe9;display:flex;justify-content:space-between;align-items:center;padding:0 8px 0 3px;border-top:1px solid #f0efe9}
.model{position:absolute;left:501px;top:359px}
.tri{position:absolute;left:10px;top:765px}
</style><div class="v"><div class="tx">Pull 1 face</div>
<ds-tool s="42" style="margin:8px 0 0 3px">${TI(34,`<path d="M6 3l20 13-9 2 6 9-5 2-5-9-7 7z" fill="#8a6c25" stroke="#e3b84f" stroke-width="1.6"/>`)}</ds-tool>
<div class="tg" style="margin-top:15px">
<ds-tool>${TI(24,`<path d="M3 25L16 11" stroke="#6fb2cb" stroke-width="3.5"/><path d="M26 2l-7 15-3-5-5-2z" fill="#7dc0d8" stroke="#34708a"/>`)}</ds-tool>
<ds-tool>${TI(26,`<ellipse cx="14" cy="14" rx="7" ry="12" transform="rotate(35 14 14)" fill="none" stroke="#5fa8c4" stroke-width="3"/><path d="M3 3l22 22" stroke="#777" stroke-width="2"/>`)}</ds-tool>
<ds-tool>${TI(24,`<path d="M2 4v22L14 8z" fill="#d6d9e2"/><path d="M2 4c10 0 12 5 24 15l-9-2-9-8" fill="#bcdce8" stroke="#6aa5bc"/>`)}</ds-tool>
<ds-tool>${TI(24,`<path d="M2 22c2-4 6 0 9-3s3-4 7-8" stroke="#5fa8c4" stroke-width="3" fill="none"/><path d="M26 3l-4 15-3-5-5-2z" fill="#7dc0d8" stroke="#34708a"/>`)}</ds-tool>
<ds-tool>${TI(24,`<path d="M8 11l6-3 6 3v8l-6 3-6-3z" fill="#c68d5f" stroke="#7a5535"/><path d="M8 11l6 3 6-3" fill="none" stroke="#eecba8"/><path d="M14 1v5M3 6l4 3M25 6l-4 3M3 23l4-3M25 23l-4-3M14 27v-4" stroke="#7f9fb0" stroke-width="1.4"/>`)}</ds-tool>
</div>
<div class="tg" style="margin-top:27px">
<ds-tool>${TI(26,`<path d="M3 2l14 14" stroke="#6fb2cb" stroke-width="3.5"/><path d="M13 14l7-4 6 3v9l-7 4-6-4z" fill="#c68d5f" stroke="#7a5535"/><path d="M13 20l-5-8 8 2z" fill="#6fb2cb"/>`)}</ds-tool>
<ds-tool off="1">${TI(24,`<path d="M3 3l17 11L3 25z" fill="#d8ebe6" stroke="#cfe0dc"/><rect x="20" y="3" width="5" height="22" fill="#e3ecf1"/>`)}</ds-tool>
</div>
<svg class="model" width="270" height="340" viewBox="0 0 270 340" aria-hidden="true">
<defs>
<linearGradient id="bell" x1="0" x2="1"><stop offset="0" stop-color="#95bc9e"/><stop offset=".35" stop-color="#7ea487"/><stop offset=".8" stop-color="#7ba285"/><stop offset="1" stop-color="#92b89b"/></linearGradient>
<radialGradient id="ball" cx=".3" cy=".35" r=".8"><stop offset="0" stop-color="#c9e6cf"/><stop offset=".4" stop-color="#a4cfaf"/><stop offset="1" stop-color="#8ebd9b"/></radialGradient>
<linearGradient id="dome" x1="0" y1="0" x2="1" y2="1"><stop offset="0" stop-color="#8fb99a"/><stop offset=".5" stop-color="#a6d0b0"/><stop offset="1" stop-color="#9cc7a6"/></linearGradient>
</defs>
<circle cx="110" cy="298" r="28" fill="url(#ball)"/>
<path d="M64 218C64 258 70 282 84 298C105 312 128 310 142 300C160 288 172 262 182 240Z" fill="url(#bell)"/>
<path d="M30 150C30 95 70 60 140 60C205 60 248 95 248 145C248 205 200 248 140 248C75 248 30 205 30 150Z" fill="#7fa78a" stroke="#3d5a44" stroke-width=".6"/>
<path d="M32 133C32 85 75 50 140 50C205 50 247 90 247 140C247 195 200 233 140 233C80 233 32 190 32 133Z" fill="#a7d1b1"/>
<path d="M42 100C60 30 110 18 150 18C210 18 250 55 250 100C250 150 205 195 150 197C95 197 50 160 42 100Z" fill="url(#dome)"/>
<path d="M72 155C110 205 195 205 240 150" fill="none" stroke="#b6dabd" stroke-width="1"/>
<ellipse cx="148" cy="97" rx="79" ry="68" fill="#7fa78a" transform="rotate(-8 148 97)"/>
<ellipse cx="150" cy="89.5" rx="78" ry="66.5" fill="#f58a2b" stroke="#2c2c20" stroke-width=".7" transform="rotate(-8 150 89.5)"/>
<path d="M155 62L150 72L147 78L149 80L147 93L152 93L156 80L158 78Z" fill="#e6d21e" stroke="#b3a61a" stroke-width=".5"/>
</svg>
<svg class="tri" width="60" height="56" viewBox="0 0 60 56" aria-hidden="true">
<text x="28" y="12" font-family="Liberation Sans" font-weight="700" font-size="10" fill="#2f8a4a" text-anchor="middle">Y</text>
<text x="6" y="46" font-family="Liberation Sans" font-weight="700" font-size="10" fill="#e02020" text-anchor="middle">X</text>
<path d="M32 20l17-5 7 16-15 11-11-7z" fill="#eef2f6" stroke="#c4ccd6"/>
<path d="M30 12l4 9-6-3z" fill="#2f8a4a"/><path d="M12 42l14-5-1 4z" fill="#e02020"/>
<circle cx="41" cy="26" r="4" fill="#1a1ad8"/><circle cx="47" cy="38" r="3.5" fill="#2fa85a"/><ellipse cx="32" cy="33" rx="2.5" ry="3.5" fill="#e02020"/><path d="M36 43l4 0-4 5z" fill="#6a6ae8"/>
</svg></div>
<div class="sb">${upc('#999','')}${caret('#999','')}</div>
<div class="sh"><span style="display:flex;align-items:center"><span style="width:2px;height:13px;border-left:1px solid #555;border-bottom:1px solid #555;margin-right:9px"></span><span style="width:0;height:0;border:4px solid transparent;border-right-color:#999;border-left:0"></span></span><span style="width:0;height:0;border:4px solid transparent;border-left-color:#999;border-right:0"></span></div>
<div style="background:#f0efe9;position:relative"><span style="display:block;width:6px;height:5px;background:#f5b763;margin-left:8px"></span></div>`);

def('ds-doctabs',()=>`<style>:host{display:flex;align-items:flex-start;height:26px;padding-top:4px;box-sizing:border-box;${FONT}}
.t{height:20px;display:flex;align-items:center;padding-left:4px;box-sizing:border-box;border:1px solid #9ea9b9;border-top:1px solid #9ea9b9;border-radius:0 0 0 5px;color:#555;background:#eceff3;white-space:nowrap;border-right:0;position:relative}
.t span{margin-left:2px}
.t::after{content:"";position:absolute;right:-6px;top:0;bottom:-1px;width:1px;background:#9ea9b9;transform:rotate(22deg)}
.a{background:#eff1f4;color:#111;font-weight:700}
.nav{margin-left:auto;display:flex;gap:6px;align-items:center;color:#9aa;padding:2px 1px 0 0;font-size:10px}
</style><div class="t" style="width:119px">${ico('doc',14)}<span>heat comp Y axis*</span></div><div class="t" style="width:113px">${ico('doc',14)}<span>Son of MegaMax</span></div><div class="t a" style="width:66px">${ico('doc',14)}<span>finial*</span><span style="margin-left:5px;color:#555;font-weight:700">×</span></div>
<div class="nav"><span style="width:0;height:0;border:4px solid transparent;border-right:5px solid #aaa;border-left:0"></span><span style="width:0;height:0;border:4px solid transparent;border-left:5px solid #aaa;border-right:0;margin-left:2px"></span><span style="font-size:13px;line-height:10px">×</span></div>`);

def('ds-quickguide',()=>`<style>:host{display:block;width:16px;height:60px;margin-left:5px;box-sizing:border-box;background:#f6f7f9;border:1px solid #999;border-left-color:#bbb;border-radius:0 3px 3px 0;${FONT}}
div{writing-mode:vertical-rl;height:58px;line-height:14px;text-align:center;white-space:nowrap;color:#444;font-size:10.5px}</style><div><slot></slot></div>`);

def('ds-status',()=>`<style>:host{display:flex;align-items:center;height:26px;flex:none;box-sizing:border-box;background:linear-gradient(#f0f1f3,#e8eaee);border-top:1px solid #c5cbd3;${FONT}}
.s{width:1px;height:25px;background:#d3d6da;flex:none}.m{display:block;flex:none}</style>
<span style="margin-left:4px;width:1267px;flex:none">Pull 1 face</span><span class="s"></span>${ico('stop',15,'margin-left:7px')}${ico('info',15,'margin-left:8px')}${upc('#aaa','margin-left:6px')}<span class="s" style="margin-left:6px"></span><span style="width:1px;height:14px;background:#999;margin-left:45px"></span><span style="margin-left:4px;font-size:10.6px">1 Face</span>${ico('sortud',13,'margin-left:56px')}${ico('curs',16,'margin-left:0')}${ico('arrowO',15,'margin-left:9px')}${upc('#444','margin-left:6px')}${ico('dashrect',15,'margin-left:6px')}${upc('#444','margin-left:4px')}<span class="s" style="margin-left:3px"></span>${ico('spinS',14,'margin-left:11px')}${upc('#444','margin-left:6px')}${ico('hand',16,'margin-left:6px')}${ico('zoom',15,'margin-left:5px')}${upc('#444','margin-left:6px')}${ico('penS',14,'margin-left:7px')}${ico('penG',14,'margin-left:15px')}`);

const tbtn='display:flex;align-items:center;justify-content:center;width:53px;height:34px;box-sizing:border-box;border:1px solid rgba(200,225,245,.55);border-radius:3px;background:linear-gradient(rgba(255,255,255,.3),rgba(255,255,255,.12) 50%,rgba(255,255,255,.2));flex:none';
def('ds-taskbar',()=>`<style>:host{display:flex;align-items:center;height:35px;flex:none;position:relative;overflow:hidden;background:linear-gradient(90deg,#3791c9,#2f8ccb 40%,#2a7cc0 60%,#1f68b0 74%,#1a5aa3 85%,#164f97);border-top:1px solid #15324d;box-sizing:border-box;color:#fff;font:11px Roboto,"Liberation Sans",sans-serif}
.st{position:absolute;left:1240px;top:0}
.tr{margin-left:auto;display:flex;align-items:center;position:relative}
.t{text-align:center;line-height:15px;width:60px;margin-left:9px}
.sd{width:12px;height:34px;margin-left:3px;background:linear-gradient(#8fb3d2,#4e7eaa);border:1px solid #244a70;box-sizing:border-box}
</style>
<svg class="st" width="70" height="35" aria-hidden="true"><path d="M8 0C24 12 40 24 52 35H40C30 24 20 10 2 0z" fill="#aed6f0" opacity=".75"/></svg>
<svg width="34" height="34" viewBox="0 0 34 34" style="margin-left:7px;flex:none" aria-hidden="true"><defs><radialGradient id="o" cx=".5" cy=".3" r=".8"><stop offset="0" stop-color="#7fc0e8"/><stop offset=".7" stop-color="#15578f"/><stop offset="1" stop-color="#0a2f52"/></radialGradient></defs><circle cx="17" cy="17" r="16" fill="url(#o)" stroke="#0d3050"/><path d="M9 10l7-1v7H9z" fill="#e35a2c"/><path d="M18 9l7 1-1 6h-6z" fill="#84ba3f"/><path d="M9 18h7v7l-8-1z" fill="#3f9ad6"/><path d="M18 18h6l1 7-7-1z" fill="#f1c52c"/></svg>
<div style="${tbtn};margin-left:12px"><svg width="32" height="28" viewBox="0 0 32 28" aria-hidden="true"><path d="M2 6h11l3 3h14v17H2z" fill="#f2d98a" stroke="#c5a64e"/><path d="M5 3h5v3H5zM11 3h4v3h-4z" fill="#6bb061"/><rect x="9" y="15" width="14" height="11" fill="#a6cfe9" stroke="#5f9fc8"/><rect x="12" y="19" width="8" height="4" fill="#e9f3fa"/></svg></div>
<svg width="28" height="28" viewBox="0 0 28 28" style="margin-left:16px;flex:none" aria-hidden="true"><circle cx="14" cy="14" r="13.5" fill="#df4a36"/><path d="M14 14L26 7a13.5 13.5 0 01-8 20z" fill="#f6c92e"/><path d="M14 14l4 13A13.5 13.5 0 012 7z" fill="#4aa84a"/><circle cx="14" cy="14" r="6.4" fill="#fff"/><circle cx="14" cy="14" r="5" fill="#4a88e0"/></svg>
<div style="${tbtn};margin-left:15px"><svg width="30" height="30" viewBox="0 0 30 30" aria-hidden="true"><circle cx="15.5" cy="14" r="11" fill="#2a55a8"/><circle cx="17" cy="10" r="6" fill="#4d9bdc"/><path d="M4 13C4 22 11 28 17 27C24 26 28 20 27 13C25 20 20 23 15 22C10 21 8 17 9 13C7 12 7 9 9 5C6 7 4 10 4 13Z" fill="#e8691f"/><path d="M9 13C11 10 14 10 18 12C17 15 14 15 12 14C11 17 14 20 18 20C14 22 8 19 9 13Z" fill="#f29a22"/><path d="M27 13C27 9 24 5 22 4C24 7 24 9 23 12C24 13 26 14 27 13Z" fill="#f5b52e"/></svg></div>
<div style="${tbtn};margin-left:3px;background:rgba(220,235,248,.45)"><span style="display:flex;width:29px;height:29px;background:#fff;align-items:center;justify-content:center;border-radius:2px">${ico('appcube',21)}</span></div>
<div style="${tbtn};margin-left:3px"><svg width="32" height="30" viewBox="0 0 32 30" aria-hidden="true"><path d="M11 2l4 5 3-4 1 8 6 0-4 5 6 3 1 5-3 2-3-2-3 2-4-2-1 6-5-3 1-5-6 1 3-5-5-4 8-1z" fill="#ec1c24"/><path d="M8 4l4 3-1 3-4-1z" fill="#222"/></svg></div>
<div class="tr">${upc('#fff','')}<svg width="15" height="15" viewBox="0 0 15 15" style="margin-left:10.5px" aria-hidden="true"><path d="M2 1v13" stroke="#fff" stroke-width="1.5"/><path d="M3 2h6l1 2h4l-2 3 2 3H9L8 8H3z" fill="#fff"/></svg><svg width="15" height="16" viewBox="0 0 15 16" style="margin-left:7px" aria-hidden="true"><rect x="3" y="3" width="11" height="9" fill="none" stroke="#fff" stroke-width="1.4"/><path d="M5 1v5M1 1h5M7 15h7M10 12v3" stroke="#fff" stroke-width="1.4"/></svg><svg width="14" height="14" viewBox="0 0 14 14" style="margin-left:7.5px" aria-hidden="true"><path d="M1 5h3l4-4v12L4 9H1z" fill="#fff"/><path d="M10 4c1 2 1 4 0 6M12 3c1.5 2 1.5 6 0 8" stroke="#cde" fill="none"/></svg>
<div class="t"><div>12:51 PM</div><div>10/27/2015</div></div><div class="sd"></div></div>`);

def('ds-tooltip',()=>`<style>:host{position:absolute;left:385px;top:125px;width:225px;height:67px;box-sizing:border-box;background:linear-gradient(#fff,#e9ecf2);border:1px solid #8a8f96;border-radius:2px;box-shadow:2px 2px 3px rgba(0,0,0,.4);${FONT}display:flex;flex-direction:column;color:#4c4c4c}
.h{font-weight:700;padding:1px 0 0 6px;line-height:14px;height:15px;color:#333;box-sizing:border-box;font-size:10.5px}
.b{display:flex;align-items:center;height:20px;padding-left:6px}
.f{margin-top:6px;border-top:1px solid #9ba0a6;display:flex;align-items:center;padding-left:5px;flex:1;font-weight:700;color:#333;background:linear-gradient(#eceff4,#e4e8ef);white-space:nowrap;font-size:10.4px}</style>
<div class="h">Sketch Mode (K)</div><div class="b">${ico('sketchmode',14)}<span style="margin-left:18px;color:#666;font-size:10.5px">Work on the sketch grid in 2D.</span></div><div class="f">${ico('help',14)}<span style="margin-left:7px">Press F1 for more help, or F3 for a video.</span></div>`);
</script>
</body></html>
